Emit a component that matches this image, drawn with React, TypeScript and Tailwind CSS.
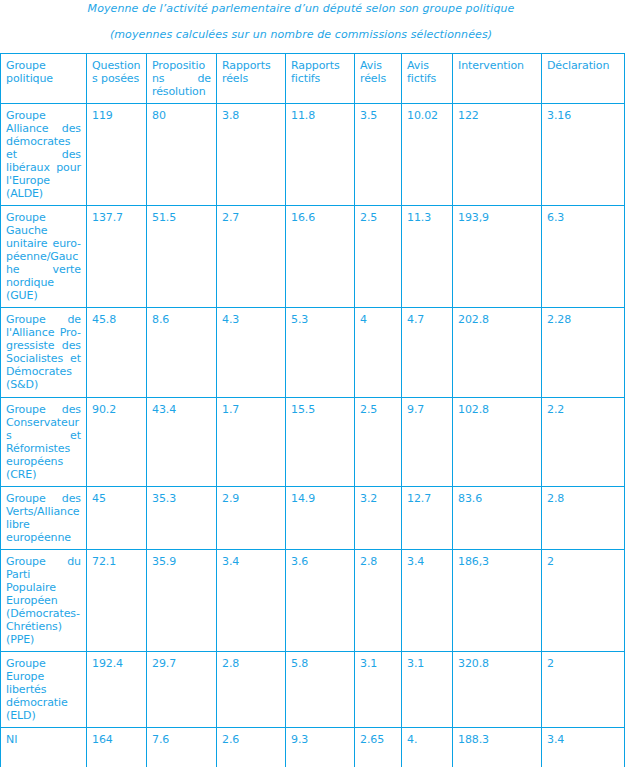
import * as React from "react";

interface Row {
  group: string;
  values: string[];
  h: string;
}

const headers = [
  "Groupe politique",
  "Questions posées",
  "Propositions de résolution",
  "Rapports réels",
  "Rapports fictifs",
  "Avis réels",
  "Avis fictifs",
  "Intervention",
  "Déclaration",
];

const colWidths = ["w-[86px]", "w-[60px]", "w-[70px]", "w-[69px]", "w-[69px]", "w-[47px]", "w-[51px]", "w-[89px]", "w-[83px]"];

const rows: Row[] = [
  { group: "Groupe Alliance des démocrates et des libéraux pour l'Europe (ALDE)", values: ["119", "80", "3.8", "11.8", "3.5", "10.02", "122", "3.16"], h: "h-[102px]" },
  { group: "Groupe Gauche unitaire euro-péenne/\u2060Gauche verte nordique (GUE)", values: ["137.7", "51.5", "2.7", "16.6", "2.5", "11.3", "193,9", "6.3"], h: "h-[102px]" },
  { group: "Groupe de l'Alliance Pro-gressiste des Socialistes et Démocrates (S&D)", values: ["45.8", "8.6", "4.3", "5.3", "4", "4.7", "202.8", "2.28"], h: "h-[90px]" },
  { group: "Groupe des Conservateurs et Réformistes européens (CRE)", values: ["90.2", "43.4", "1.7", "15.5", "2.5", "9.7", "102.8", "2.2"], h: "h-[89px]" },
  { group: "Groupe des Verts/\u2060Alliance libre européenne", values: ["45", "35.3", "2.9", "14.9", "3.2", "12.7", "83.6", "2.8"], h: "h-[63px]" },
  { group: "Groupe du Parti Populaire Européen (Démocrates-\u2060Chrétiens) (PPE)", values: ["72.1", "35.9", "3.4", "3.6", "2.8", "3.4", "186,3", "2"], h: "h-[102px]" },
  { group: "Groupe Europe libertés démocratie (ELD)", values: ["192.4", "29.7", "2.8", "5.8", "3.1", "3.1", "320.8", "2"], h: "h-[76px]" },
  { group: "NI", values: ["164", "7.6", "2.6", "9.3", "2.65", "4.", "188.3", "3.4"], h: "h-[52px]" },
];

const cell = "border border-[#0aa2e4] px-[5px] pt-[5px] pb-[5px] align-top text-justify tracking-[-0.1px] [overflow-wrap:anywhere]";

export default function App() {
  return (
    <div className="bg-white min-h-screen text-[#1ea5e6] text-[11px] leading-[13px] font-['DejaVu_Sans',Verdana,sans-serif]">
      <div className="w-[602px] text-center italic tracking-[0.1px]">
        <p className="pt-[2px]">Moyenne de l’activité parlementaire d’un député selon son groupe politique</p>
        <p className="pt-[13px]">(moyennes calculées sur un nombre de commissions sélectionnées)</p>
      </div>

      <table className="mt-[12px] w-[625px] border-collapse table-fixed">
        <colgroup>
          {colWidths.map((w, i) => (
            <col key={i} className={w} />
          ))}
        </colgroup>
        <thead>
          <tr className="h-[50px]">
            {headers.map((h) => (
              <th key={h} className={`${cell} font-normal`}>{h}</th>
            ))}
          </tr>
        </thead>
        <tbody>
          {rows.map((row) => (
            <tr key={row.group} className={row.h}>
              <td className={cell}>{row.group}</td>
              {row.values.map((v, i) => (
                <td key={i} className={cell}>{v}</td>
              ))}
            </tr>
          ))}
        </tbody>
      </table>
    </div>
  );
}
